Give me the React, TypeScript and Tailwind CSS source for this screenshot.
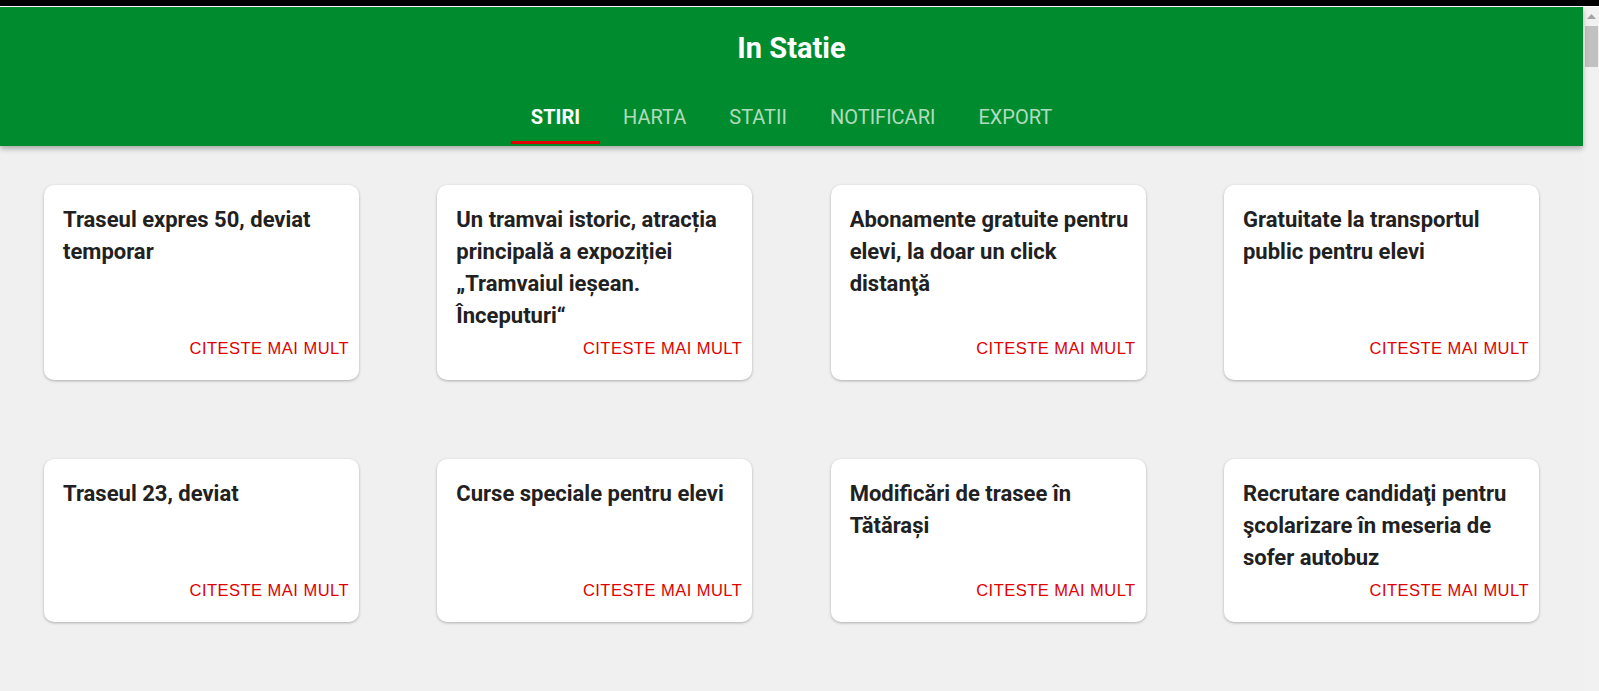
const tabs = ['Stiri', 'Harta', 'Statii', 'Notificari', 'Export'];

const news: string[][] = [
    ['Traseul expres 50, deviat', 'temporar'],
    ['Un tramvai istoric, atracția', 'principală a expoziției', '„Tramvaiul ieșean.', 'Începuturi“'],
    ['Abonamente gratuite pentru', 'elevi, la doar un click', 'distanţă'],
    ['Gratuitate la transportul', 'public pentru elevi'],
    ['Traseul 23, deviat'],
    ['Curse speciale pentru elevi'],
    ['Modificări de trasee în', 'Tătărași'],
    ['Recrutare candidaţi pentru', 'şcolarizare în meseria de', 'sofer autobuz'],
];

interface NewsCardProps {
    lines: string[];
}

const NewsCard = (props: NewsCardProps) => {
    return (
        <div className="w-[315px] bg-white rounded-[10px] shadow-[0_1px_3px_rgba(0,0,0,0.28)] flex flex-col pt-[19px] pb-[15px]">
            <h2 className="pl-[19px] text-[22px] leading-[32px] font-bold text-[#212121]">
                {props.lines.map((line) => (
                    <span key={line} className="block whitespace-nowrap">
                        {line}
                    </span>
                ))}
            </h2>
            <div className="mt-auto h-[33px] pb-[1px] flex items-center justify-end pr-[10px]">
                <span className="font-['Liberation_Sans',Arial,sans-serif] text-[16.5px] tracking-[0.02857em] text-[#e00000] uppercase">
                    Citeste mai mult
                </span>
            </div>
        </div>
    );
};

const Scrollbar = () => {
    return (
        <div className="w-[16px] bg-[#f1f1f1] flex flex-col">
            <div className="h-[19px] flex items-center justify-center">
                <svg width="9" height="5" viewBox="0 0 9 5">
                    <path d="M0 5 L4.5 0 L9 5 Z" fill="#a3a3a3" />
                </svg>
            </div>
            <div className="pl-[2px] pr-[1px]">
                <div className="h-[41px] bg-[#c1c1c1]" />
            </div>
        </div>
    );
};

export default function App() {
    return (
        <div className="h-[691px] flex flex-col bg-[#f0f0f0] overflow-hidden font-['Roboto','Noto_Sans',sans-serif]">
            <div className="h-[6px] bg-black" />
            <div className="h-[1px] bg-white" />
            <div className="flex flex-1 min-h-0">
                <div className="flex-1 flex flex-col">
                    <header className="relative z-10 bg-[#008c2e] shadow-[0_3px_5px_rgba(0,0,0,0.28)] flex flex-col items-center pb-[2px]">
                        <div className="h-[83px] flex items-center">
                            <h1 className="text-[29px] font-bold text-white">In Statie</h1>
                        </div>
                        <nav className="h-[54px] flex gap-[3px]">
                            {tabs.map((tab, i) => (
                                <div
                                    key={tab}
                                    className={
                                        i === 0
                                            ? 'px-5 pt-[3px] flex items-center border-b-[3px] border-[#e00000] text-[20px] uppercase font-bold text-white'
                                            : 'px-5 pt-[3px] flex items-center border-b-[3px] border-transparent text-[20px] uppercase text-white/70'
                                    }
                                >
                                    {tab}
                                </div>
                            ))}
                        </nav>
                    </header>
                    <main className="flex flex-col gap-y-[79px] px-[44px] pt-[39px]">
                        <div className="flex justify-between">
                            {news.slice(0, 4).map((lines) => (
                                <NewsCard key={lines[0]} lines={lines} />
                            ))}
                        </div>
                        <div className="flex justify-between">
                            {news.slice(4).map((lines) => (
                                <NewsCard key={lines[0]} lines={lines} />
                            ))}
                        </div>
                    </main>
                </div>
                <Scrollbar />
            </div>
        </div>
    );
}
